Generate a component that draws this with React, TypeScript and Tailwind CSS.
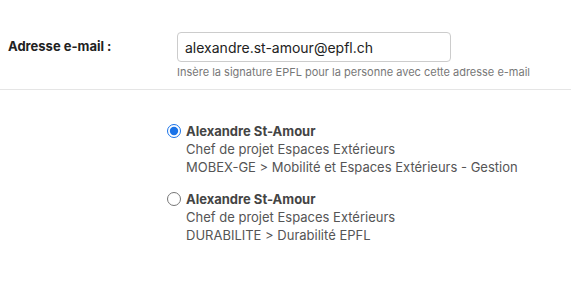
import React, { useState } from "react";

const people = [
  {
    id: "mobex",
    name: "Alexandre St-Amour",
    title: "Chef de projet Espaces Extérieurs",
    unit: "MOBEX-GE > Mobilité et Espaces Extérieurs - Gestion",
  },
  {
    id: "durabilite",
    name: "Alexandre St-Amour",
    title: "Chef de projet Espaces Extérieurs",
    unit: "DURABILITE > Durabilité EPFL",
  },
];

export default function App() {
  const [selected, setSelected] = useState("mobex");

  return (
    <div className="w-[571px] h-[291px] bg-white font-['Inter',sans-serif] text-[#333]">
      {/* email row */}
      <div className="flex pt-[32px] pb-[10px]">
        <label className="w-[177px] shrink-0 pl-[8px] h-[30px] flex items-center text-[13px] font-bold text-[#222]">
          Adresse e-mail :
        </label>
        <div>
          <input
            type="text"
            defaultValue="alexandre.st-amour@epfl.ch"
            className="w-[274px] h-[30px] px-[7px] border border-[#ccc] rounded-[4px] text-[14px] text-[#222] outline-none"
          />
          <p className="mt-[3px] text-[11px] leading-[14px] text-[#777]">
            Insère la signature EPFL pour la personne avec cette adresse e-mail
          </p>
        </div>
      </div>

      <div className="h-px bg-[#e5e5e5]" />

      {/* choices */}
      <div className="pl-[167px] pt-[32px] flex flex-col gap-[14px]">
        {people.map((p) => (
          <label key={p.id} className="flex items-start gap-[5px] cursor-pointer">
            <input
              type="radio"
              name="person"
              checked={selected === p.id}
              onChange={() => setSelected(p.id)}
              className="mt-[2px] w-[14px] h-[14px] accent-[#1a73e8]"
            />
            <div className="text-[13px] leading-[18px]">
              <div className="font-bold text-[#444]">{p.name}</div>
              <div className="text-[#555]">{p.title}</div>
              <div className="text-[#555]">{p.unit}</div>
            </div>
          </label>
        ))}
      </div>
    </div>
  );
}
